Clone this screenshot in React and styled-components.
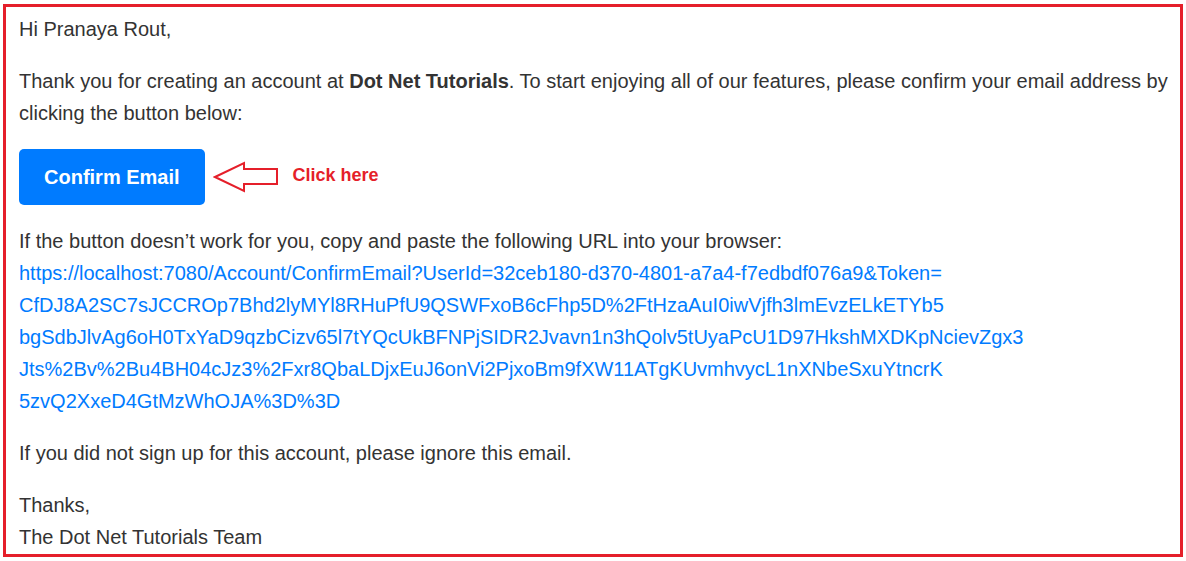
import React from "react";
import styled, { createGlobalStyle } from "styled-components";

const GlobalStyle = createGlobalStyle`
  html, body {
    margin: 0;
    padding: 0;
    background: #ffffff;
  }
  body {
    font-family: "Liberation Sans", Arial, sans-serif;
  }
`;

const Page = styled.div`
  padding: 4px 3px 0 3px;
`;

const Mail = styled.div`
  box-sizing: border-box;
  height: 553px;
  overflow: hidden;
  border: 3px solid #e51f2a;
  padding: 6px 6px 0 13px;
  color: #333333;
  font-size: 20px;
  line-height: 32px;
`;

const Para = styled.p`
  margin: 0 0 20px 0;
`;

const ButtonRow = styled.div`
  display: flex;
  align-items: center;
  margin: 0 0 20px 0;
`;

const ConfirmButton = styled.a`
  display: inline-block;
  background: #007bff;
  color: #ffffff;
  font-weight: bold;
  text-decoration: none;
  padding: 12px 25px;
  border-radius: 5px;
`;

const Pointer = styled.svg`
  margin-left: 8px;
  flex: none;
`;

const Hint = styled.span`
  margin-left: 14px;
  margin-top: -4px;
  color: #e51f2a;
  font-size: 18px;
  font-weight: bold;
`;

const Link = styled.a`
  color: #007bff;
  text-decoration: none;
`;

const urlParts = [
  "https://localhost:7080/Account/ConfirmEmail?UserId=32ceb180-d370-4801-a7a4-f7edbdf076a9&Token=",
  "CfDJ8A2SC7sJCCROp7Bhd2lyMYl8RHuPfU9QSWFxoB6cFhp5D%2FtHzaAuI0iwVjfh3lmEvzELkETYb5",
  "bgSdbJlvAg6oH0TxYaD9qzbCizv65l7tYQcUkBFNPjSIDR2Jvavn1n3hQolv5tUyaPcU1D97HkshMXDKpNcievZgx3",
  "Jts%2Bv%2Bu4BH04cJz3%2Fxr8QbaLDjxEuJ6onVi2PjxoBm9fXW11ATgKUvmhvycL1nXNbeSxuYtncrK",
  "5zvQ2XxeD4GtMzWhOJA%3D%3D",
];

export default function App() {
  return (
    <>
      <GlobalStyle />
      <Page>
        <Mail>
          <Para>Hi Pranaya Rout,</Para>
          <Para>
            Thank you for creating an account at <b>Dot Net Tutorials</b>. To start
            enjoying all of our features, please confirm your email address by
            clicking the button below:
          </Para>
          <ButtonRow>
            <ConfirmButton href="#">Confirm Email</ConfirmButton>
            <Pointer width="66" height="34" viewBox="0 0 66 34">
              <polygon
                points="2,17 31,3 31,9 64,9 64,24 31,24 31,31"
                fill="none"
                stroke="#e51f2a"
                strokeWidth="2"
                strokeLinejoin="miter"
              />
            </Pointer>
            <Hint>Click here</Hint>
          </ButtonRow>
          <Para>
            If the button doesn’t work for you, copy and paste the following URL
            into your browser:
            <br />
            <Link href="#">
              {urlParts.map((part, i) => (
                <React.Fragment key={i}>
                  {part}
                  {i < urlParts.length - 1 && <br />}
                </React.Fragment>
              ))}
            </Link>
          </Para>
          <Para>If you did not sign up for this account, please ignore this email.</Para>
          <Para>
            Thanks,
            <br />
            The Dot Net Tutorials Team
          </Para>
        </Mail>
      </Page>
    </>
  );
}
